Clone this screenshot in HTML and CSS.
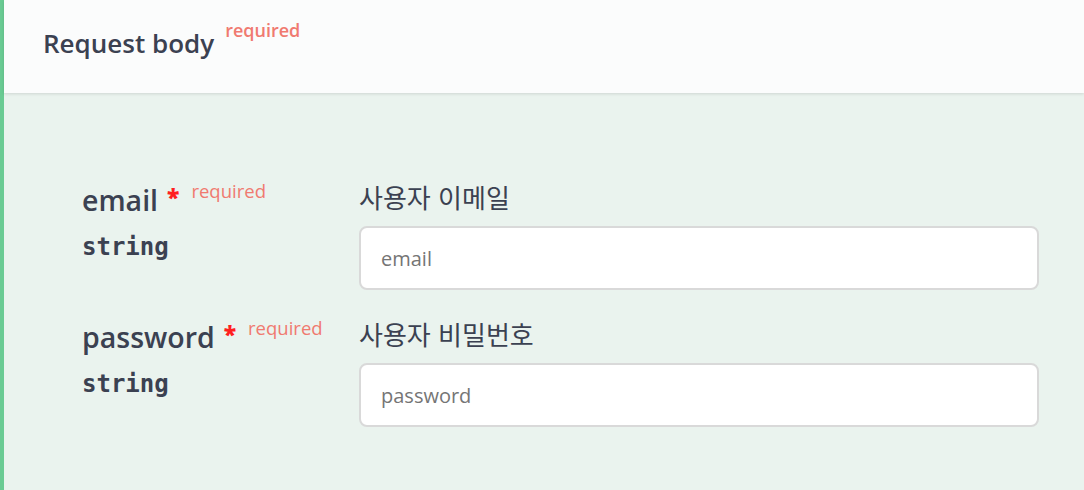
FILE: index.html
```html
<!DOCTYPE html>
<html lang="ko">
<head>
<meta charset="utf-8">
<link rel="stylesheet" href="styles.css">
</head>
<body>
<div class="opblock">
  <div class="section-header">
    <h4 class="title">Request body<span class="title-req">required</span></h4>
  </div>
  <div class="section-body">
    <div class="param-row">
      <div class="param-name">
        <div class="name">email<span class="star">*</span><span class="req">required</span></div>
        <div class="type">string</div>
      </div>
      <div class="param-desc">
        <div class="desc">사용자 이메일</div>
        <input class="field" type="text" placeholder="email">
      </div>
    </div>
    <div class="param-row">
      <div class="param-name">
        <div class="name">password<span class="star">*</span><span class="req">required</span></div>
        <div class="type">string</div>
      </div>
      <div class="param-desc">
        <div class="desc">사용자 비밀번호</div>
        <input class="field" type="text" placeholder="password">
      </div>
    </div>
  </div>
</div>
</body>
</html>
```

FILE: styles.css
```css
html, body {
  margin: 0;
  padding: 0;
  height: 100%;
  background: #eaf3ee;
}
body {
  font-family: "Open Sans", "Noto Sans CJK KR", sans-serif;
  color: #3b4151;
}
.opblock {
  border-left: 4px solid #6acb93;
  min-height: 490px;
  box-sizing: border-box;
  background: #eaf3ee;
}
.section-header {
  height: 93px;
  box-sizing: border-box;
  background: #fbfcfc;
  box-shadow: 0 1px 3px rgba(0, 0, 0, 0.12);
  display: flex;
  align-items: flex-start;
  padding: 21px 0 0 39px;
  position: relative;
}
.title {
  margin: 0;
  font-size: 26px;
  font-weight: 600;
  line-height: 1;
  white-space: nowrap;
}
.title-req {
  font-size: 18px;
  font-weight: 600;
  color: #f07a70;
  vertical-align: 16px;
  margin-left: 11px;
}
.section-body {
  padding: 78px 46px 0 78px;
}
.param-row {
  display: grid;
  grid-template-columns: 277px 1fr;
  margin-bottom: 18px;
}
.name {
  font-size: 28.5px;
  font-weight: 600;
  line-height: 40px;
  white-space: nowrap;
}
.star {
  color: #ff1f1f;
  font-size: 23px;
  font-weight: 800;
  vertical-align: 5px;
  margin-left: 9px;
}
.req {
  font-size: 18.5px;
  font-weight: 500;
  color: #f07a70;
  vertical-align: 13px;
  margin-left: 12px;
}
.type {
  font-family: "DejaVu Sans Mono", monospace;
  font-weight: 700;
  font-size: 24px;
  line-height: 32px;
  margin-top: 11px;
}
.desc {
  font-family: "Noto Sans CJK KR", sans-serif;
  font-size: 26px;
  line-height: 36px;
  margin-top: 8px;
}
.field {
  display: block;
  box-sizing: border-box;
  width: 680px;
  height: 64px;
  margin-top: 11px;
  border: 2px solid #d9d9d9;
  border-radius: 8px;
  background: #fff;
  padding: 0 20px;
  font-family: "Open Sans", sans-serif;
  font-size: 20px;
  color: #3b4151;
  outline: none;
}
.field::placeholder {
  color: #757575;
}
```
